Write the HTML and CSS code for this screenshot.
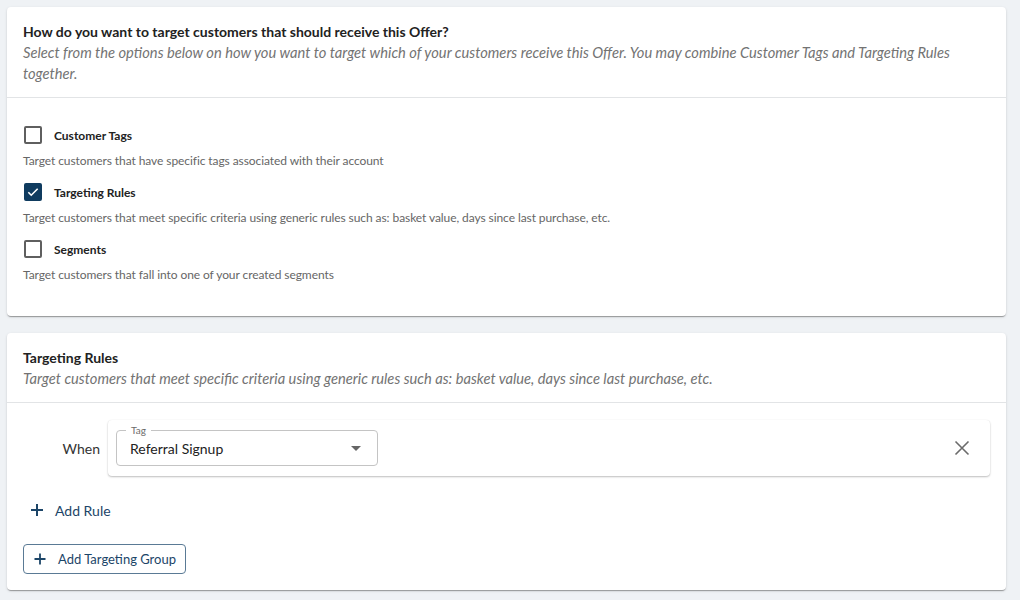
FILE: index.html
```html
<!DOCTYPE html>
<html lang="en">
<head>
    <meta charset="UTF-8">
    <meta name="viewport" content="width=device-width, initial-scale=1.0">
    <title>Offer Targeting</title>
    <link rel="stylesheet" href="styles.css">
</head>
<body>
    <div class="card">
        <div class="card-header">
            <h2 class="card-title">How do you want to target customers that should receive this Offer?</h2>
            <p class="card-subtitle">Select from the options below on how you want to target which of your customers receive this Offer. You may combine Customer Tags and Targeting Rules together.</p>
        </div>
        <div class="card-body options">
            <div class="option">
                <label class="option-row">
                    <span class="checkbox"></span>
                    <span class="option-label">Customer Tags</span>
                </label>
                <p class="option-desc">Target customers that have specific tags associated with their account</p>
            </div>
            <div class="option">
                <label class="option-row">
                    <span class="checkbox checked">
                        <svg width="16" height="16" viewBox="0 0 24 24"><path d="M4 12.5l5 5L20 6.5" fill="none" stroke="#fff" stroke-width="2.8"/></svg>
                    </span>
                    <span class="option-label">Targeting Rules</span>
                </label>
                <p class="option-desc">Target customers that meet specific criteria using generic rules such as: basket value, days since last purchase, etc.</p>
            </div>
            <div class="option">
                <label class="option-row">
                    <span class="checkbox"></span>
                    <span class="option-label">Segments</span>
                </label>
                <p class="option-desc">Target customers that fall into one of your created segments</p>
            </div>
        </div>
    </div>

    <div class="card">
        <div class="card-header">
            <h2 class="card-title">Targeting Rules</h2>
            <p class="card-subtitle">Target customers that meet specific criteria using generic rules such as: basket value, days since last purchase, etc.</p>
        </div>
        <div class="card-body rules">
            <div class="rule-row">
                <span class="rule-when">When</span>
                <div class="rule-box">
                    <div class="select">
                        <span class="select-label">Tag</span>
                        <span class="select-value">Referral Signup</span>
                        <span class="select-arrow"></span>
                    </div>
                    <button class="rule-remove" type="button">
                        <svg width="16" height="16" viewBox="0 0 16 16"><path d="M1.5 1.5L14.5 14.5M14.5 1.5L1.5 14.5" stroke="#6b6b6b" stroke-width="1.6"/></svg>
                    </button>
                </div>
            </div>

            <button class="add-rule" type="button">
                <svg width="14" height="14" viewBox="0 0 14 14"><path d="M7 1v12M1 7h12" stroke="#1c4568" stroke-width="2"/></svg>
                Add Rule
            </button>

            <button class="add-group" type="button">
                <svg width="12" height="12" viewBox="0 0 12 12"><path d="M6 0.5v11M0.5 6h11" stroke="#1c4568" stroke-width="1.8"/></svg>
                Add Targeting Group
            </button>
        </div>
    </div>
</body>
</html>
```

FILE: styles.css
```css
body {
    margin: 0;
    padding: 7px 14px 10px 7px;
    background-color: #eff2f5;
    font-family: Lato, "Open Sans", sans-serif;
    color: #222;
}
.card {
    background-color: #fff;
    border-radius: 4px;
    box-shadow: 0 2px 1px -1px rgba(0, 0, 0, 0.2), 0 1px 1px 0 rgba(0, 0, 0, 0.14), 0 1px 3px 0 rgba(0, 0, 0, 0.12);
    margin-bottom: 17px;
}
.card-header {
    padding: 14px 16px 13px;
    border-bottom: 1px solid #e2e4e6;
}
.card-title {
    margin: 0;
    font-size: 14px;
    line-height: 21px;
    font-weight: 700;
    color: #222;
}
.card-subtitle {
    margin: 0;
    font-size: 14.7px;
    line-height: 21px;
    font-style: italic;
    color: #737373;
    padding-right: 20px;
}
.card-body {
    padding: 0 16px;
}
.options {
    padding-top: 23px;
    padding-bottom: 32px;
    display: flex;
    flex-direction: column;
    gap: 8px;
}
.option-row {
    display: flex;
    align-items: center;
    height: 28px;
    padding-left: 1px;
}
.checkbox {
    box-sizing: border-box;
    width: 18px;
    height: 18px;
    border: 2px solid #5f5f5f;
    border-radius: 2px;
    display: flex;
    align-items: center;
    justify-content: center;
    margin-right: 12px;
}
.checkbox.checked {
    background-color: #0f3b5f;
    border-color: #0f3b5f;
}
.option-label {
    font-size: 12px;
    font-weight: 700;
    color: #222;
}
.option-desc {
    margin: 3px 0 0;
    font-size: 12px;
    line-height: 18px;
    letter-spacing: -0.08px;
    color: #666;
}
.rules {
    padding-top: 17px;
    padding-bottom: 16px;
}
.rule-row {
    display: flex;
    align-items: center;
}
.rule-when {
    width: 77px;
    text-align: right;
    margin-right: 8px;
    font-size: 14px;
    color: #333;
}
.rule-box {
    flex: 1;
    display: flex;
    align-items: center;
    justify-content: space-between;
    padding: 10px 8px;
    border-radius: 4px;
    background-color: #fff;
    box-shadow: 0 1px 2px rgba(0, 0, 0, 0.25), 0 0 1px rgba(0, 0, 0, 0.08);
}
.select {
    position: relative;
    box-sizing: border-box;
    width: 262px;
    height: 36px;
    border: 1px solid #c4c4c4;
    border-radius: 4px;
    display: flex;
    align-items: center;
    padding: 0 13px;
}
.select-label {
    position: absolute;
    top: -8px;
    left: 9px;
    padding: 0 5px;
    background-color: #fff;
    font-size: 10px;
    line-height: 14px;
    color: #6b6b6b;
}
.select-value {
    flex: 1;
    font-size: 14px;
    color: #222;
}
.select-arrow {
    width: 0;
    height: 0;
    border-left: 5px solid transparent;
    border-right: 5px solid transparent;
    border-top: 5px solid #666;
    margin-right: 3px;
}
.rule-remove {
    border: none;
    background: none;
    padding: 0;
    margin-right: 12px;
    width: 16px;
    height: 16px;
    cursor: pointer;
}
.add-rule {
    display: flex;
    align-items: center;
    gap: 11px;
    margin-top: 19px;
    height: 30px;
    padding: 0 0 0 7px;
    border: none;
    background: none;
    font-family: Lato, "Open Sans", sans-serif;
    font-size: 14px;
    color: #1c4568;
    cursor: pointer;
}
.add-group {
    display: flex;
    align-items: center;
    gap: 12px;
    margin-top: 19px;
    height: 30px;
    padding: 0 9px 0 10px;
    border: 1px solid #5a7a95;
    border-radius: 4px;
    background-color: #fff;
    font-family: Lato, "Open Sans", sans-serif;
    font-size: 13px;
    color: #1c4568;
    cursor: pointer;
}
```
